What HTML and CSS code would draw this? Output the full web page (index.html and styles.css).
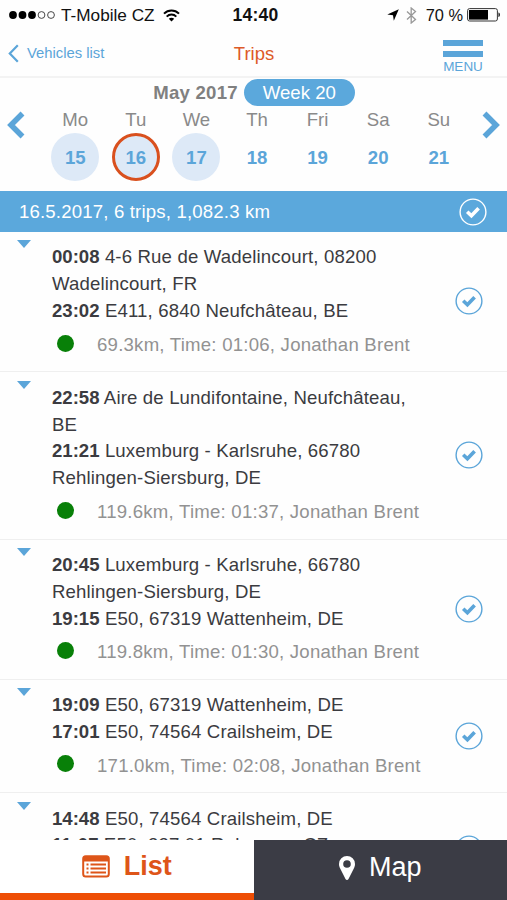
FILE: index.html
```html
<!DOCTYPE html>
<html lang="en">
<head>
    <meta charset="UTF-8">
    <meta name="viewport" content="width=device-width, initial-scale=1.0">
    <title>Trips</title>
    <link rel="stylesheet" href="styles.css">
</head>
<body>
    <svg class="defs" width="0" height="0">
        <symbol id="check" viewBox="0 0 28 28">
            <circle cx="14" cy="14" r="12.9" fill="none" stroke="currentColor" stroke-width="1.4"/>
            <path d="M8.2 13.8l4.2 4 7.2-7.6" fill="none" stroke="currentColor" stroke-width="3.6"/>
        </symbol>
    </svg>
    <div class="app">
        <div class="status-bar">
            <div class="carrier">
                <svg width="47" height="10" viewBox="0 0 47 10">
                    <circle cx="4" cy="5" r="3.9"/><circle cx="13.5" cy="5" r="3.9"/><circle cx="23" cy="5" r="3.9"/>
                    <circle cx="32.5" cy="5" r="3.4" fill="none" stroke="#333" stroke-width=".9"/><circle cx="42" cy="5" r="3.4" fill="none" stroke="#333" stroke-width=".9"/>
                </svg>
                <span class="carrier-name">T-Mobile CZ</span>
                <svg width="17" height="13" viewBox="0 0 17 13" fill="none" stroke="#000" stroke-width="2">
                    <path d="M1 4.6C5.2 .4 11.8 .4 16 4.6M3.7 7.6c2.7-2.7 6.9-2.7 9.6 0"/>
                    <path d="M8.5 12.4L5.8 9.7c1.5-1.4 3.9-1.4 5.4 0z" fill="#000" stroke="none"/>
                </svg>
            </div>
            <span class="clock">14:40</span>
            <div class="indicators">
                <svg width="12" height="12" viewBox="0 0 12 12"><path d="M11.8 .3L6.8 11.7 6 6.2 .3 5.5z"/></svg>
                <svg width="11" height="17" viewBox="0 0 11 17" fill="none" stroke="#999" stroke-width="1.3"><path d="M1 4.5l8.5 8-4.3 3.5V1l4.3 3.5L1 12.5"/></svg>
                <span class="percent">70 %</span>
                <svg width="34" height="14" viewBox="0 0 34 14">
                    <rect x=".6" y=".6" width="29.8" height="12.4" rx="2" fill="none" stroke="#333" stroke-width="1"/>
                    <rect x="2" y="2" width="19" height="9.6"/><path d="M31.5 4.5c1.8.5 1.8 4.1 0 4.6z"/>
                </svg>
            </div>
        </div>

        <div class="nav-bar">
            <div class="back">
                <svg width="11" height="19" viewBox="0 0 11 19"><path d="M9.8 1.2L1.8 9.5l8 8.3" fill="none" stroke="currentColor" stroke-width="2.2"/></svg>
                <span>Vehicles list</span>
            </div>
            <div class="title">Trips</div>
            <div class="menu"><i></i><i></i><span>MENU</span></div>
        </div>

        <div class="calendar">
            <svg class="arrow" width="18" height="28" viewBox="0 0 18 28"><path d="M15.5 2.5L4 14l11.5 11.5" fill="none" stroke="currentColor" stroke-width="5.5"/></svg>
            <div class="week">
                <div class="month"><b>May 2017</b><span class="badge">Week 20</span></div>
                <div class="days">
                    <div class="day">Mo<b class="has-trips">15</b></div>
                    <div class="day">Tu<b class="has-trips selected">16</b></div>
                    <div class="day">We<b class="has-trips">17</b></div>
                    <div class="day">Th<b>18</b></div>
                    <div class="day">Fri<b>19</b></div>
                    <div class="day">Sa<b>20</b></div>
                    <div class="day">Su<b>21</b></div>
                </div>
            </div>
            <svg class="arrow" width="18" height="28" viewBox="0 0 18 28"><path d="M2.5 2.5L14 14 2.5 25.5" fill="none" stroke="currentColor" stroke-width="5.5"/></svg>
        </div>

        <div class="summary">
            <span>16.5.2017, 6 trips, 1,082.3 km</span>
            <svg class="check"><use href="#check"/></svg>
        </div>

        <div class="trips">
            <div class="trip">
                <i class="caret"></i>
                <div class="info">
                    <div><b>00:08</b> 4-6 Rue de Wadelincourt, 08200<br>Wadelincourt, FR</div>
                    <div><b>23:02</b> E411, 6840 Neufchâteau, BE</div>
                    <div class="detail"><i class="dot"></i>69.3km, Time: 01:06, Jonathan Brent</div>
                </div>
                <svg class="check"><use href="#check"/></svg>
            </div>
            <div class="trip">
                <i class="caret"></i>
                <div class="info">
                    <div><b>22:58</b> Aire de Lundifontaine, Neufchâteau,<br>BE</div>
                    <div><b>21:21</b> Luxemburg - Karlsruhe, 66780<br>Rehlingen-Siersburg, DE</div>
                    <div class="detail"><i class="dot"></i>119.6km, Time: 01:37, Jonathan Brent</div>
                </div>
                <svg class="check"><use href="#check"/></svg>
            </div>
            <div class="trip">
                <i class="caret"></i>
                <div class="info">
                    <div><b>20:45</b> Luxemburg - Karlsruhe, 66780<br>Rehlingen-Siersburg, DE</div>
                    <div><b>19:15</b> E50, 67319 Wattenheim, DE</div>
                    <div class="detail"><i class="dot"></i>119.8km, Time: 01:30, Jonathan Brent</div>
                </div>
                <svg class="check"><use href="#check"/></svg>
            </div>
            <div class="trip">
                <i class="caret"></i>
                <div class="info">
                    <div><b>19:09</b> E50, 67319 Wattenheim, DE</div>
                    <div><b>17:01</b> E50, 74564 Crailsheim, DE</div>
                    <div class="detail"><i class="dot"></i>171.0km, Time: 02:08, Jonathan Brent</div>
                </div>
                <svg class="check"><use href="#check"/></svg>
            </div>
            <div class="trip">
                <i class="caret"></i>
                <div class="info">
                    <div><b>14:48</b> E50, 74564 Crailsheim, DE</div>
                    <div><b>11:07</b> E50, 337 01 Rokycany, CZ</div>
                    <div class="detail"><i class="dot"></i></div>
                </div>
                <svg class="check"><use href="#check"/></svg>
            </div>
        </div>

        <div class="tabs">
            <div class="tab active">
                <svg width="28" height="23" viewBox="0 0 28 23">
                    <rect x="1.2" y="1.2" width="25.6" height="20.4" rx="2.5" fill="none" stroke="currentColor" stroke-width="2"/>
                    <path d="M1 2h26v4.5H1z" fill="currentColor"/>
                    <path d="M4.5 9.5h2M8.5 9.5h15.5M4.5 13.5h2M8.5 13.5h15.5M4.5 17.5h2M8.5 17.5h15.5" stroke="currentColor" stroke-width="2"/>
                </svg>
                <span>List</span>
            </div>
            <div class="tab">
                <svg width="16" height="24" viewBox="0 0 16 24"><path fill="currentColor" fill-rule="evenodd" d="M8 0a8 8 0 0 1 8 8c0 2-.6 3.3-1.3 4.8L9.5 23c-.6 1.2-2.4 1.2-3 0L1.3 12.8C.6 11.3 0 10 0 8a8 8 0 0 1 8-8zm0 4.2a3.8 3.8 0 1 0 0 7.6 3.8 3.8 0 0 0 0-7.6z"/></svg>
                <span>Map</span>
            </div>
        </div>
    </div>
</body>
</html>
```
FILE: styles.css
```css
* {
    box-sizing: border-box;
}
body {
    margin: 0;
    font-family: "Liberation Sans", Arial, sans-serif;
    font-size: 18.6px;
    color: #3b3b40;
    background-color: #fefefe;
}
.defs { display: none; }
.app {
    display: flex;
    flex-direction: column;
    height: 900px;
    overflow: hidden;
}
.status-bar {
    display: grid;
    grid-template-columns: 1fr auto 1fr;
    align-items: center;
    height: 30px;
    padding: 0 6px 0 9px;
    font-size: 17.2px;
    color: #111;
}
.carrier, .indicators {
    display: flex;
    align-items: center;
}
.carrier-name { margin: 0 8px 0 5px; }
.clock {
    margin-left: 1px;
    font-size: 17.5px;
    font-weight: bold;
    letter-spacing: 0.2px;
}
.indicators {
    justify-content: flex-end;
}
.percent {
    margin: 0 4px 0 9px;
    font-size: 16.4px;
}
.indicators svg + svg { margin-left: 7px; }
.nav-bar {
    display: grid;
    grid-template-columns: 1fr auto 1fr;
    align-items: center;
    height: 48px;
    padding: 0 24px 0 8px;
    border-bottom: 2px solid #f3f3f3;
    color: #5ba5d9;
}
.back {
    display: flex;
    align-items: center;
    gap: 8px;
    font-size: 14.8px;
}
.title {
    margin-left: 17px;
    padding-top: 2px;
    font-size: 18.5px;
    color: #dd5a28;
}
.menu {
    display: flex;
    flex-direction: column;
    align-items: center;
    justify-self: end;
    width: 40px;
    padding-top: 7px;
    font-size: 13.5px;
    line-height: 13px;
}
.menu i {
    width: 40px;
    height: 6px;
    margin-bottom: 5px;
    background-color: #5ba5d9;
}
.menu i + i { margin-bottom: 3px; }
.calendar {
    display: flex;
    height: 113px;
    padding: 0 7px;
    color: #5ba5d9;
}
.arrow { margin-top: 33px; }
.week { flex: 1; }
.month {
    display: flex;
    align-items: center;
    justify-content: center;
    gap: 6px;
    height: 29px;
    padding-left: 1px;
    color: #808080;
}
.month b { letter-spacing: 0.25px; }
.badge {
    width: 111px;
    height: 27px;
    border-radius: 14px;
    background-color: #5ba8dc;
    color: #fff;
    line-height: 28px;
    text-align: center;
}
.days {
    display: flex;
    padding: 0 13px 0 20px;
}
.day {
    display: flex;
    flex: 1;
    flex-direction: column;
    align-items: center;
    color: #8a8a8a;
    line-height: 26px;
}
.day b {
    width: 48px;
    height: 48px;
    border-radius: 50%;
    color: #5ba5d9;
    line-height: 49px;
    text-align: center;
}
.day .has-trips { background-color: #dde9f7; }
.day .selected {
    border: 3px solid #d9501e;
    line-height: 43px;
}
.summary {
    display: flex;
    align-items: center;
    justify-content: space-between;
    height: 41px;
    padding: 0 20px 0 19px;
    background-color: #5ba8dc;
    color: #fff;
    letter-spacing: 0.17px;
}
.check {
    flex: none;
    width: 28px;
    height: 28px;
}
.trips {
    flex: 1;
    overflow: hidden;
}
.trip {
    display: flex;
    align-items: center;
    padding: 12.3px 24px 12.8px 17px;
    border-bottom: 1px solid #efefef;
    line-height: 26.9px;
    letter-spacing: 0.15px;
    white-space: nowrap;
}
.trip b { letter-spacing: 0; }
.trip .check { color: #5ba5d9; }
.caret {
    align-self: flex-start;
    margin: -4px 21px 0 0;
    border: 7px solid transparent;
    border-top: 8px solid #5ba5d9;
    border-bottom: 0;
}
.info { flex: 1; }
.detail {
    display: flex;
    align-items: center;
    height: 27px;
    margin-top: 6.5px;
    color: #929292;
    letter-spacing: 0.23px;
}
.dot {
    width: 17px;
    height: 17px;
    margin: -4px 23px 0 5px;
    border-radius: 50%;
    background-color: #088008;
}
.tabs {
    display: flex;
    height: 60px;
    font-size: 27px;
}
.tab {
    display: flex;
    flex: 1;
    align-items: center;
    justify-content: center;
    gap: 14px;
    padding-bottom: 5px;
    background-color: #3b3c45;
    color: #fff;
}
.tab.active {
    padding-bottom: 0;
    border-bottom: 7px solid #ee4e05;
    background-color: #fff;
    color: #de5519;
    font-weight: bold;
}
```
